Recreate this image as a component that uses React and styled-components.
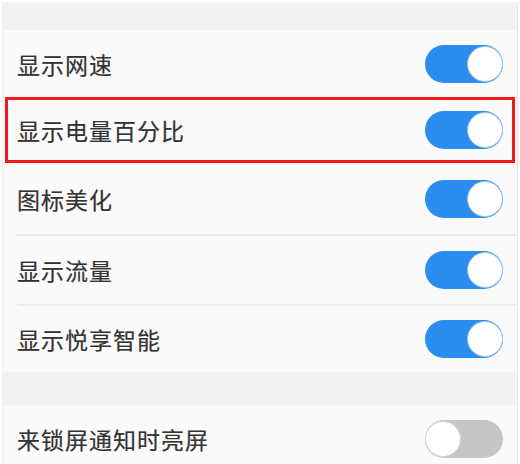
import styled, { createGlobalStyle } from 'styled-components'

const GlobalStyle = createGlobalStyle`
html, body {
  margin: 0;
  padding: 0;
  background: #ffffff;
}
body {
  font-family: "Noto Sans CJK SC", "Noto Sans", sans-serif;
}
`

const Panel = styled.div`
margin: 2px 2px 0 2px;
border-left: 1px solid #efefef;
border-right: 1px solid #e4e4e4;
background: #fafafa;
height: 462px;
overflow: hidden;
`

const Gap = styled.div`
height: ${p => p.h}px;
background: #f2f2f2;
`

const Row = styled.div`
position: relative;
height: ${p => p.h || 68}px;
display: flex;
align-items: center;
justify-content: space-between;
padding: 0 14px 0 14px;
background: #fafafa;
${p => p.highlighted && `
  &::after {
    content: '';
    position: absolute;
    left: 2px;
    right: 2px;
    top: 0;
    bottom: 0;
    border: 3px solid #f01a1a;
    pointer-events: none;
  }
`}
`

const Divider = styled.div`
height: 2px;
margin-left: 14px;
background: #ebebeb;
`

const Label = styled.span`
font-size: 23px;
color: #333333;
letter-spacing: 1px;
-webkit-text-stroke: 0.2px #333333;
`

const Track = styled.div`
width: 78px;
height: 38px;
border-radius: 19px;
background: ${p => (p.on ? '#2c8df0' : '#c6c6c6')};
display: flex;
align-items: center;
justify-content: ${p => (p.on ? 'flex-end' : 'flex-start')};
`

const Knob = styled.div`
width: 36px;
height: 36px;
border-radius: 50%;
background: #ffffff;
border: 1px solid ${p => (p.on ? '#9fc3e0' : '#d4d4d4')};
box-sizing: border-box;
`

function Toggle({ on }) {
  return (
    <Track on={on ? 1 : 0}>
      <Knob on={on ? 1 : 0} />
    </Track>
  )
}

export default function App() {
  return (
    <>
      <GlobalStyle />
      <Panel>
        <Gap h={28} />
        <Row h={67}>
          <Label>显示网速</Label>
          <Toggle on />
        </Row>
        <Row h={66} highlighted>
          <Label>显示电量百分比</Label>
          <Toggle on />
        </Row>
        <Row h={71}>
          <Label>图标美化</Label>
          <Toggle on />
        </Row>
        <Divider />
        <Row>
          <Label>显示流量</Label>
          <Toggle on />
        </Row>
        <Divider />
        <Row h={66}>
          <Label>显示悦享智能</Label>
          <Toggle on />
        </Row>
        <Gap h={33} />
        <Row>
          <Label>来锁屏通知时亮屏</Label>
          <Toggle />
        </Row>
      </Panel>
    </>
  )
}
